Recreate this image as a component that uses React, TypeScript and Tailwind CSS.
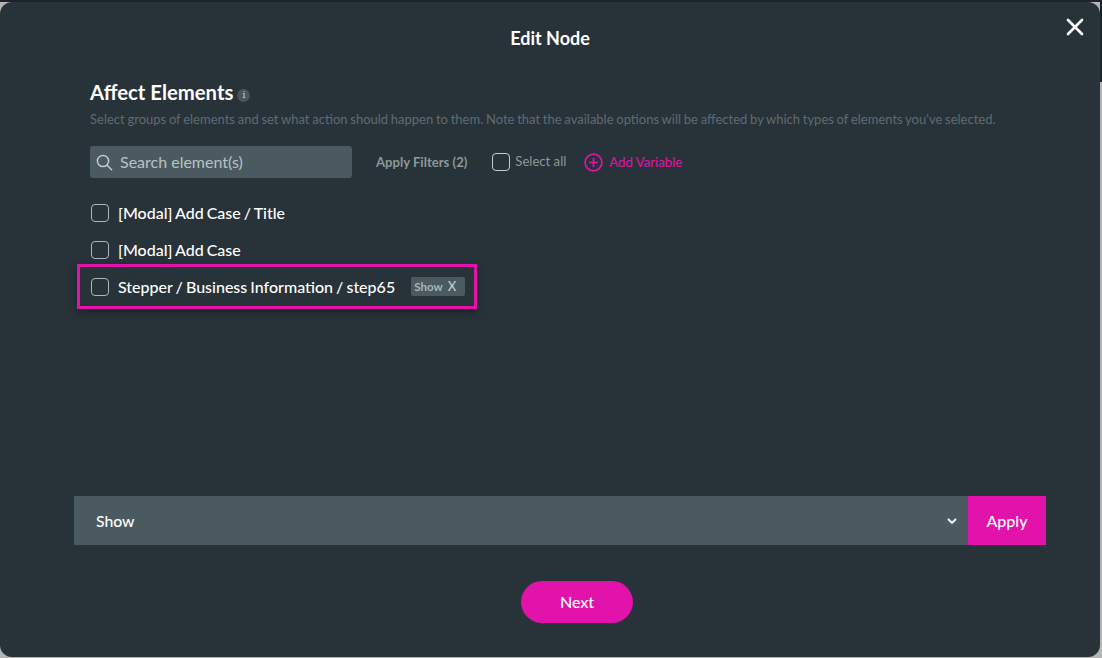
import React from "react";

function Box({ light }: { light?: boolean }) {
  return <span className={`block w-[18px] h-[18px] rounded-[4px] border shrink-0 ${light ? "border-[#c4cccc]" : "border-[#aeb6b8]"}`} />;
}

function Row({ label, tag }: { label: string; tag?: boolean }) {
  return (
    <div className="flex items-center h-[37px] pl-[17px]">
      <Box />
      <span className="ml-[9px] text-[16px] [word-spacing:-1px] font-medium text-white leading-none">{label}</span>
      {tag && (
        <span className="ml-[16px] flex items-center w-[54px] h-[19px] rounded-[2px] bg-[#4a5a60] pl-[3px] text-[11.5px] font-bold text-[#a9b5b6] leading-none">
          Show
          <span className="ml-[5px] text-[13px] font-medium text-[#c5cccd]">X</span>
        </span>
      )}
    </div>
  );
}

export default function App() {
  return (
    <div className="relative w-[1102px] h-[658px] overflow-hidden bg-[#b4b4b4]" style={{ fontFamily: "Lato, sans-serif" }}>
      <div className="absolute top-0 left-0 w-full h-[2px] bg-[#1c2429]" />
      <div className="absolute top-0 right-0 w-[2px] h-[82px] bg-[#1c2429]" />
      <div className="relative mt-[2px] w-[1100px] h-[655px] rounded-[12px] bg-[#283239] flex flex-col">
        <button className="absolute top-[15px] right-[15px] text-white">
          <svg width="20" height="20" viewBox="0 0 20 20" fill="none" stroke="currentColor" strokeWidth="2.6" strokeLinecap="round">
            <path d="M3 3l14 14M17 3L3 17" />
          </svg>
        </button>
        <h1 className="mt-[25px] text-center text-[18px] leading-[22px] font-bold text-white">Edit Node</h1>

        <div className="mt-[31px] pl-[90px] flex items-center">
          <h2 className="text-[20.3px] leading-[24px] font-bold text-white">Affect Elements</h2>
          <span className="ml-[4px] mt-[6px] flex items-center justify-center w-[13px] h-[13px] rounded-full bg-[#4a545a] text-[9px] leading-none font-normal text-[#d5dadb]" style={{ fontFamily: "'DejaVu Serif', serif" }}>i</span>
        </div>
        <p className="mt-[7px] pl-[90px] text-[13px] [word-spacing:-0.6px] leading-[16px] text-[#5f6c72]">
          Select groups of elements and set what action should happen to them. Note that the available options will be affected by which types of elements you've selected.
        </p>

        <div className="mt-[19px] ml-[90px] flex items-center h-[32px]">
          <div className="flex items-center w-[262px] h-[32px] rounded-[3px] bg-[#4a5a60] pl-[6px]">
            <svg width="17" height="17" viewBox="0 0 17 17" fill="none" stroke="#c3cbcc" strokeWidth="1.5" strokeLinecap="round">
              <circle cx="7" cy="7" r="5.6" />
              <path d="M11.2 11.2l4.4 4.6" />
            </svg>
            <span className="ml-[7px] text-[16px] text-[#b9c2c4]">Search element(s)</span>
          </div>
          <span className="ml-[24px] mt-[2px] text-[13.1px] font-bold text-[#8a9a9a]">Apply Filters (2)</span>
          <span className="ml-[25px]"><Box light /></span>
          <span className="ml-[5px] text-[13.1px] text-[#8a9a9a]">Select all</span>
          <svg className="ml-[18px]" width="19" height="19" viewBox="0 0 19 19" fill="none" stroke="#e213ab" strokeWidth="1.7">
            <circle cx="9.5" cy="9.5" r="8.4" />
            <path d="M9.5 5v9M5 9.5h9" />
          </svg>
          <span className="ml-[6px] mt-[2px] text-[13.2px] text-[#e213ab]">Add Variable</span>
        </div>

        <div className="mt-[16px] ml-[74px] flex flex-col">
          <Row label="[Modal] Add Case / Title" />
          <Row label="[Modal] Add Case" />
          <div className="-mt-[4px] ml-[3px] w-[400px] h-[45px] pl-[1px] border-[3px] border-[#e213ab] shadow-[0_3px_8px_rgba(0,0,0,0.35)] [&>div]:pl-[10px] [&>div]:h-[39px] box-border">
            <Row label="Stepper / Business Information / step65" tag />
          </div>
        </div>

        <div className="mt-[187px] ml-[74px] flex w-[972px] h-[49px]">
          <div className="flex-1 flex items-center justify-between bg-[#4a5a60] pl-[22px] pr-[10px] text-[15.75px] font-medium text-white">
            Show
            <svg width="12" height="12" viewBox="0 0 12 12" fill="none" stroke="white" strokeWidth="1.8">
              <path d="M2 4l4 4 4-4" />
            </svg>
          </div>
          <button className="w-[78px] bg-[#e213ab] text-white text-[16px] font-medium">Apply</button>
        </div>

        <button className="mt-[36px] ml-[521px] block w-[112px] h-[42px] rounded-full bg-[#e213ab] text-white text-[16px] font-medium">Next</button>
      </div>
    </div>
  );
}
